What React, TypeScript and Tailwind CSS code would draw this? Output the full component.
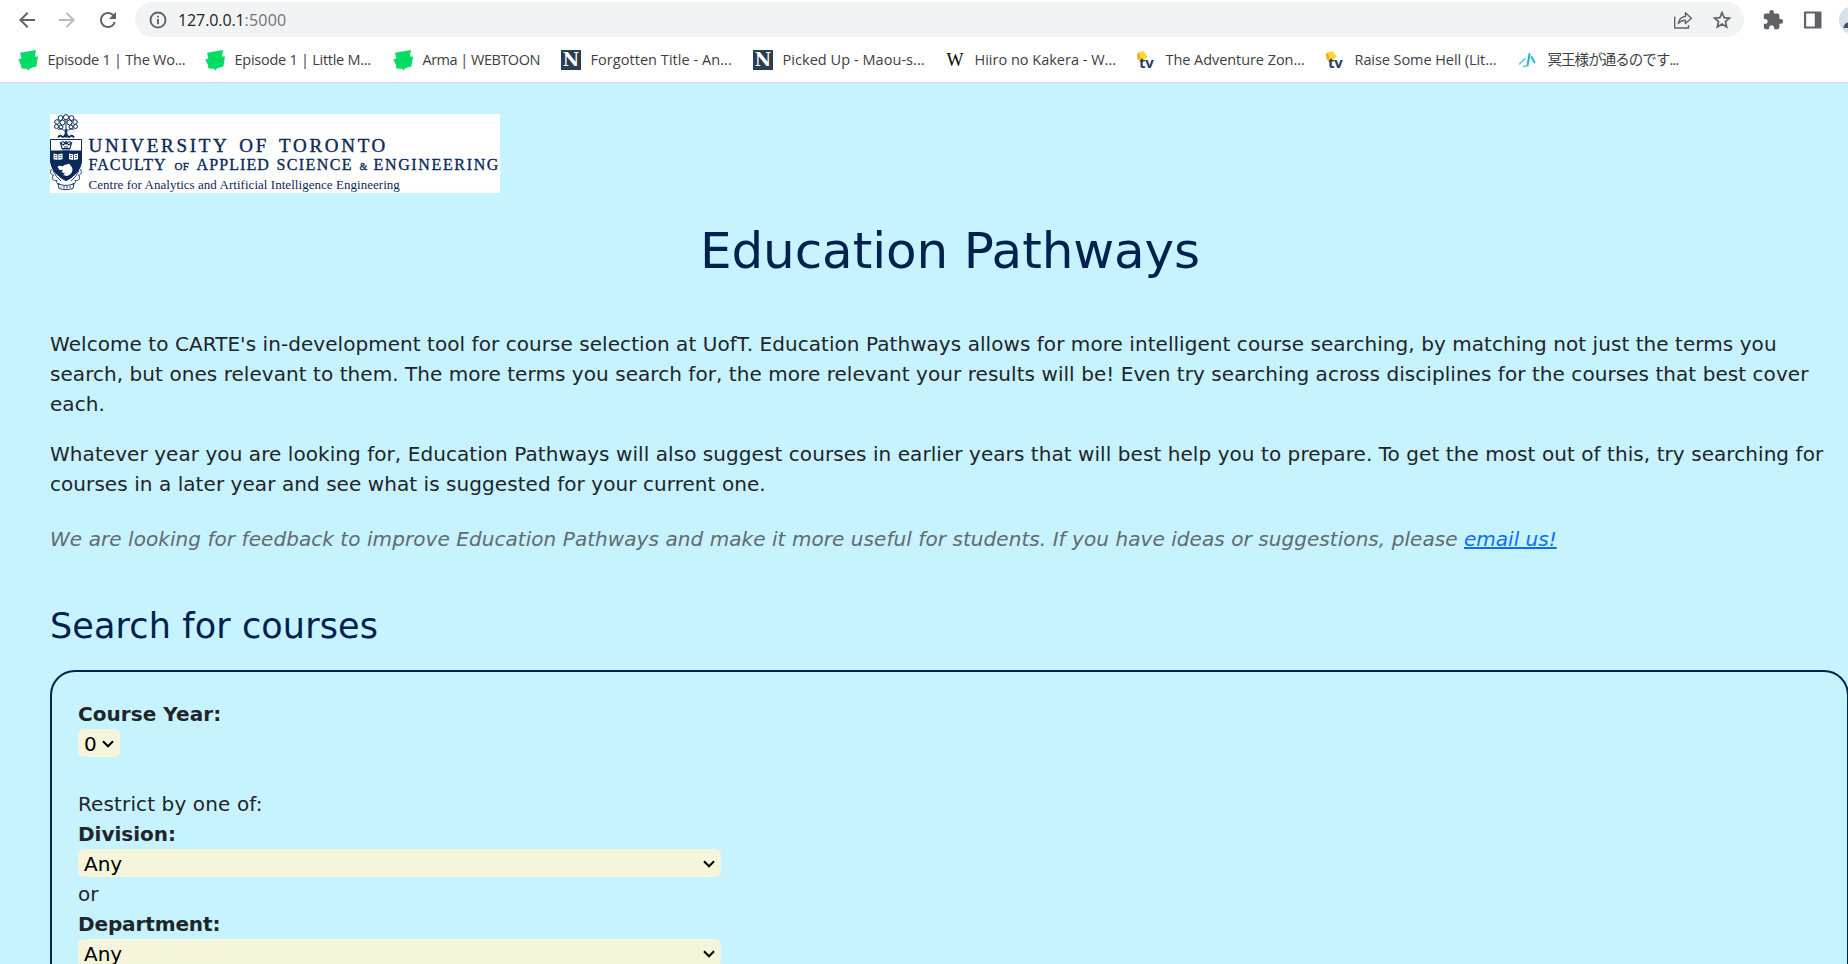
import type { ReactNode } from "react";
import { MdArrowBack, MdArrowForward, MdExtension, MdRefresh } from "react-icons/md";

function InfoIcon() {
  return (
    <svg viewBox="0 0 20 20" className="h-5 w-5" fill="none" stroke="#5f6368" strokeWidth="1.9">
      <circle cx="10" cy="10" r="7.500" />
      <path d="M10 9V14.200M10 5.700V7.600" />
    </svg>
  );
}

function StarIcon() {
  return (
    <svg viewBox="0 0 22 22" className="ml-[18px] h-[22px] w-[22px]" fill="none" stroke="#5f6368" strokeWidth="1.700">
      <path d="M11 3.700L13.150 8.600L18.500 9.100L14.450 12.650L15.650 17.900L11 15.100L6.350 17.900L7.550 12.650L3.500 9.100L8.850 8.600Z" />
    </svg>
  );
}

function ShareIcon() {
  return (
    <svg viewBox="0 0 20 20" className="h-5 w-5" fill="none" stroke="#5f6368" strokeWidth="1.4" strokeLinejoin="round">
      <path d="M1.7 6.5V18H15.5V15" />
      <path d="M5.3 13.6C6 9 8.4 6.8 12.4 6.5V2.8L18.4 8.3L12.4 13.6V10.2C9.200 10.200 7 11.200 5.300 13.600Z" />
    </svg>
  );
}

function SidePanelIcon() {
  return (
    <svg viewBox="0 0 18 18" className="h-[18px] w-[18px]">
      <path fill="#5f6368" fillRule="evenodd" d="M0 0.500H17.500V17.500H0ZM2.200 2.500V15.500H10.800V2.500Z" />
    </svg>
  );
}

function WebtoonIcon() {
  return (
    <svg viewBox="0 0 20 24" className="h-6 w-5">
      <path
        fill="#00dc64"
        d="M2 4.800L18 2L16.800 8.500L20 8.500L18.300 18.500L14.500 19.500L11.800 20.500L10.500 22.500L8.800 20.800L3.400 20.500L3 17L0.300 11.500L3.400 10.500Z"
      />
    </svg>
  );
}

function NIcon() {
  return (
    <span className="flex h-5 w-5 items-center justify-center bg-[#2b3d52] font-['DejaVu_Serif',serif] text-[18px] leading-none font-bold text-white">
      N
    </span>
  );
}

function WikiIcon() {
  return (
    <span className="flex h-5 w-5 items-center justify-center font-['Liberation_Serif',serif] text-[18px] leading-none text-black">
      W
    </span>
  );
}

function TvIcon() {
  return (
    <span className="relative block h-5 w-5">
      <svg viewBox="0 0 20 20" className="h-5 w-5">
        <path fill="#fdd835" d="M2.500 2.500L7.500 1L11.500 6.500L8 10L2 10Z" />
        <path fill="#f5a623" d="M1 4L3 2.200L4.500 9L1.500 9.500Z" />
      </svg>
      <span className="absolute top-[4px] left-[3px] font-['Open_Sans',sans-serif] text-[15px] leading-[16px] font-bold tracking-[-0.2px] text-[#2a3f5f]">
        tv
      </span>
    </span>
  );
}

function SyosetuIcon() {
  return (
    <svg viewBox="0 0 20 20" className="h-5 w-5" fill="none" strokeLinecap="round">
      <path stroke="#18b7c6" strokeWidth="2" d="M11.500 4L9.500 15.500" />
      <path stroke="#18b7c6" strokeWidth="1.800" d="M13.500 7L16.500 12.500" />
      <path stroke="#5cc8d2" strokeWidth="1.400" d="M7 8.500L1.500 14M9.500 15.500L5.500 16.500" />
    </svg>
  );
}

const bookmarks: { label: string; icon: ReactNode; box: string; text: string }[] = [
  { label: "Episode 1 | The Wo...", icon: <WebtoonIcon />, box: "w-[187px]", text: "tracking-[-0.25px]" },
  { label: "Episode 1 | Little M...", icon: <WebtoonIcon />, box: "w-[188px]", text: "tracking-[-0.26px]" },
  { label: "Arma | WEBTOON", icon: <WebtoonIcon />, box: "w-[168px]", text: "tracking-[-0.5px]" },
  { label: "Forgotten Title - An...", icon: <NIcon />, box: "w-[192px]", text: "tracking-[0.05px]" },
  { label: "Picked Up - Maou-s...", icon: <NIcon />, box: "w-[192px]", text: "tracking-[0.05px]" },
  { label: "Hiiro no Kakera - W...", icon: <WikiIcon />, box: "w-[191px]", text: "tracking-[0px]" },
  { label: "The Adventure Zon...", icon: <TvIcon />, box: "w-[189px]", text: "tracking-[-0.06px]" },
  { label: "Raise Some Hell (Lit...", icon: <TvIcon />, box: "w-[193px]", text: "tracking-[-0.07px]" },
  { label: "冥王様が通るのです...", icon: <SyosetuIcon />, box: "w-[180px]", text: "tracking-[-0.95px]" },
];

function BrowserChrome() {
  return (
    <header className="h-[83px] border-b border-[#d5d8dc] bg-white font-['Open_Sans','Noto_Sans_CJK_JP',sans-serif]">
      <div className="flex h-[37px] items-center pt-[2px] pl-[15px] text-[#5f6368]">
        <MdArrowBack className="h-6 w-6 shrink-0" />
        <MdArrowForward className="ml-4 h-6 w-6 shrink-0 text-[#b9bbbe]" />
        <MdRefresh className="ml-[17px] h-6 w-6 shrink-0" />
        <div className="ml-[15px] flex h-[35px] w-[1609px] shrink-0 items-center rounded-full bg-[#f1f3f4] pr-[11px] pl-[13px]">
          <InfoIcon />
          <span className="ml-[10px] text-[16px] tracking-[-0.1px] text-[#202124]">127.0.0.1</span>
          <span className="text-[16px] tracking-[0.2px] text-[#70757a]">:5000</span>
          <span className="ml-auto">
            <ShareIcon />
          </span>
          <StarIcon />
        </div>
        <MdExtension className="ml-[18px] h-[22px] w-[22px] shrink-0" />
        <span className="ml-[20px] shrink-0">
          <SidePanelIcon />
        </span>
        <svg viewBox="0 0 9 28" className="ml-auto h-7 w-[9px] shrink-0">
          <circle cx="14" cy="14" r="14" fill="#dadfe8" />
          <path d="M4.500 22C4.500 18.500 6.500 17 9 16.500V22Z" fill="#46526b" />
        </svg>
      </div>
      <nav className="flex h-[45px] items-center pl-[18px]">
        {bookmarks.map((b) => (
          <a key={b.label} className={"flex shrink-0 items-center gap-[9.5px] " + b.box}>
            <span className="shrink-0">{b.icon}</span>
            <span className={"text-[14.5px] leading-5 whitespace-nowrap text-[#3c4043] " + b.text}>{b.label}</span>
          </a>
        ))}
      </nav>
    </header>
  );
}

function Crest() {
  return (
    <svg viewBox="0 0 33 79" className="h-[79px] w-[33px] shrink-0" fill="none" stroke="#0a2a5c">
      <g strokeWidth="1">
        <circle cx="16" cy="3.200" r="2.600" />
        <circle cx="10.500" cy="4" r="2.400" />
        <circle cx="21.500" cy="4" r="2.400" />
        <circle cx="7" cy="8" r="2.300" />
        <circle cx="25" cy="8" r="2.300" />
        <circle cx="6.500" cy="12.500" r="2" />
        <circle cx="25.500" cy="12.500" r="2" />
        <circle cx="12.500" cy="8.500" r="2.500" />
        <circle cx="19.500" cy="8.500" r="2.500" />
        <circle cx="11" cy="13" r="2" />
        <circle cx="21" cy="13" r="2" />
        <path d="M8 15.500C11 14 13 15.500 14.500 17M24 15.500C21 14 19 15.500 17.500 17M16 6V16" />
        <path d="M15.200 15V20L13 23H19L16.800 20V15" fill="#0a2a5c" />
        <path d="M8 23.500C10 20.500 12 22 13 23.500M24 23.500C22 20.500 20 22 19 23.500" strokeWidth="1.800" />
      </g>
      <path d="M0.500 25.500H31.500V45C31.500 55 25 62 16 66.500C7 62 0.500 55 0.500 45Z" fill="#fff" />
      <path d="M0.500 37H31.500V45C31.500 55 25 62 16 66.500C7 62 0.500 55 0.500 45Z" fill="#0a2a5c" />
      <path
        d="M10.500 29L12 34.500H20L21.500 29L18.500 31L16 27.500L13.500 31ZM12 36H20M11 28.500C13 27 14 28 16 30C18 28 19 27 21 28.500M14 33H18"
        strokeWidth="1.100"
      />
      <g fill="#fff" stroke="none">
        <path d="M3.500 39.500L7.500 40.200V46L3.500 45.200ZM8.300 40.200L12.500 39.500V45.200L8.300 46Z" />
        <path d="M19 39.500L23 40.200V46L19 45.200ZM23.800 40.200L28 39.500V45.200L23.800 46Z" />
        <path d="M7.500 53C9 51 11 51.500 12.500 52.500C15 50 17 51 19 49.500L22 53.500C23.500 57 21 61 17 62L13 61L15 59.500L11.500 58L13 56L9.500 56Z" />
      </g>
      <path
        d="M4.500 41.500H6.500M9.500 41.500H11.500M20 41.500H22M25 41.500H27M4.500 43.500H6.500M9.500 43.500H11.500M20 43.500H22M25 43.500H27"
        strokeWidth="0.700"
      />
      <g strokeWidth="0.900">
        <path d="M1.500 55C-0.500 58 1 61 3.500 61C1 64 3 67.500 7 66.500C6 69 8 71 10 70" />
        <path d="M30.500 55C32.500 58 31 61 28.500 61C31 64 29 67.500 25 66.500C26 69 24 71 22 70" />
        <path d="M3 56.500L6.500 62.500L11 67M29 56.500L25.500 62.500L21 67" />
        <path d="M8 69.500C13 72 19 72 24 69.500L23 74.500C18 76 14 76 9 74.500ZM11 72.500V73.500M14 72V74.500M17 72V74.500M20 72V74" />
      </g>
    </svg>
  );
}

function Logo() {
  return (
    <div className="flex h-[79px] w-[450px] overflow-hidden bg-white font-['Liberation_Serif',serif] text-[#0a2a5c]">
      <Crest />
      <div className="ml-[5.5px] shrink-0 pt-[22px] whitespace-nowrap">
        <div className="h-[19px] text-[19px] leading-5 tracking-[2.7px] [word-spacing:3px] [-webkit-text-stroke:0.4px]">
          UNIVERSITY OF TORONTO
        </div>
        <div className="flex h-[19px] items-baseline text-[16px] leading-[20px] [-webkit-text-stroke:0.35px]">
          <span className="w-[86px] tracking-[1px]">FACULTY</span>
          <span className="w-[22px] text-[11px] tracking-[0.3px]">OF</span>
          <span className="w-[80px] tracking-[1.1px]">APPLIED</span>
          <span className="w-[83px] tracking-[1.4px]">SCIENCE</span>
          <span className="w-[14px] text-[10px]">&amp;</span>
          <span className="tracking-[1.65px]">ENGINEERING</span>
        </div>
        <div className="pt-[3px] text-[13px] leading-4 tracking-[0.04px]">
          Centre for Analytics and Artificial Intelligence Engineering
        </div>
      </div>
    </div>
  );
}

function Picker({ value, width }: { value: string; width: string }) {
  return (
    <div className="h-[30px]">
      <button
        type="button"
        className={
          "flex h-7 items-center justify-between rounded-md bg-[#f5f5dc] pt-px pr-[6px] pl-[6px] text-left text-black " + width
        }
      >
        <span className="leading-7">{value}</span>
        <svg viewBox="0 0 12 8" className="h-2 w-3" fill="none" stroke="#000" strokeWidth="2">
          <path d="M1 1.300L6 6.300L11 1.300" />
        </svg>
      </button>
    </div>
  );
}

export default function App() {
  return (
    <div className="h-[964px] w-[1848px] overflow-hidden bg-[#c7f2ff] font-['DejaVu_Sans',sans-serif] text-[20px] leading-[30px] text-[#212529]">
      <BrowserChrome />
      <main className="pt-[31px] pl-[50px]">
        <Logo />
        <h1 className="mt-[28px] pl-[2px] text-center text-[50px] leading-[60px] tracking-[-0.1px] text-[#00204e]">
          Education Pathways
        </h1>
        <p className="mt-[48px] tracking-[0.055px] whitespace-nowrap">
          Welcome to CARTE's in-development tool for course selection at UofT. Education Pathways allows for more
          intelligent course searching, by matching not just the terms you
          <br />
          search, but ones relevant to them. The more terms you search for, the more relevant your results will be! Even
          try searching across disciplines for the courses that best cover
          <br />
          each.
        </p>
        <p className="mt-5 tracking-[0.064px] whitespace-nowrap">
          Whatever year you are looking for, Education Pathways will also suggest courses in earlier years that will best
          help you to prepare. To get the most out of this, try searching for
          <br />
          courses in a later year and see what is suggested for your current one.
        </p>
        <p className="mt-[25px] tracking-[0.064px] whitespace-nowrap text-[#5f6b70] italic">
          We are looking for feedback to improve Education Pathways and make it more useful for students. If you have
          ideas or suggestions, please{" "}
          <a className="tracking-[0px] text-[#0d6efd] underline" href="#email">
            email us!
          </a>
        </p>
        <h2 className="mt-[51px] text-[35px] leading-[42px] tracking-[0.12px] text-[#00204e]">Search for courses</h2>
        <section className="mt-[23px] h-[400px] w-[1799px] rounded-[25px] border-2 border-[#00204e] pt-[27px] pl-[26px]">
          <div className="font-bold tracking-[0.06px]">Course Year:</div>
          <Picker value="0" width="w-[42px]" />
          <div className="mt-[30px] tracking-[0.12px]">Restrict by one of:</div>
          <div className="font-bold">Division:</div>
          <Picker value="Any" width="w-[643px]" />
          <div>or</div>
          <div className="font-bold tracking-[-0.12px]">Department:</div>
          <Picker value="Any" width="w-[643px]" />
        </section>
      </main>
    </div>
  );
}
